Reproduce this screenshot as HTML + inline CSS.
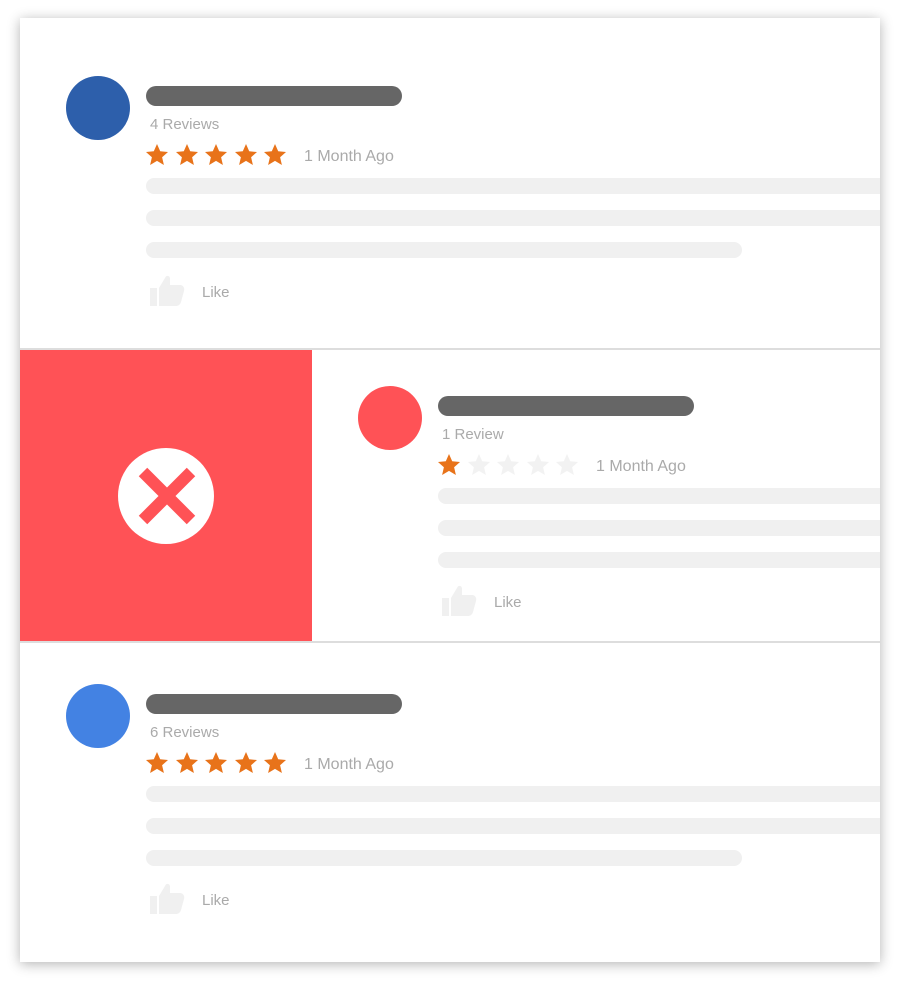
<!DOCTYPE html>
<html><head><style>
*{margin:0;padding:0;box-sizing:border-box}
body{width:900px;height:984px;background:#fff;position:relative;overflow:hidden;font-family:"Liberation Sans",sans-serif}
.card{position:absolute;left:20px;top:18px;width:860px;height:944px;background:#fff;box-shadow:0 2px 12px rgba(0,0,0,.3);overflow:hidden}
.a{position:absolute}
.av{position:absolute;width:64px;height:64px;border-radius:50%}
.nb{position:absolute;height:20px;width:256px;border-radius:10px;background:#666}
.gb{position:absolute;height:16px;border-radius:8px;background:#f0f0f0}
.t{position:absolute;color:#aaa;font-size:15px;white-space:nowrap}
.div{position:absolute;left:0;width:860px;height:2px;background:#ddd}
</style></head><body>
<div class="card">
<svg width="0" height="0" style="position:absolute"><defs><path id="st" d="M12 1l3.2 7.3 7.8.7-5.9 5.2 1.8 7.8L12 17.9 5.1 22l1.8-7.8L1 9l7.8-.7z"/><path id="th" d="M0 14h7v18H0zM9 14l6-10c1-3 5-3 5 1v6h10c3 0 5 3 4 6l-3 11c-1 3-3 4-5 4H9z"/></defs></svg>

<!-- section 1 -->
<div class="av" style="left:46px;top:58px;background:#2d5fab"></div>
<div class="nb" style="left:126px;top:68px"></div>
<div class="t" style="left:130px;top:98px">4 Reviews</div>
<svg class="a" style="left:125px;top:125px" width="150" height="26" fill="#e8731a"><use href="#st"/><use href="#st" x="30"/><use href="#st" x="59"/><use href="#st" x="89"/><use href="#st" x="118"/></svg>
<div class="t" style="left:284px;top:130px;font-size:16px">1 Month Ago</div>
<div class="gb" style="left:126px;top:160px;width:760px"></div>
<div class="gb" style="left:126px;top:192px;width:760px"></div>
<div class="gb" style="left:126px;top:224px;width:596px"></div>
<svg class="a" style="left:130px;top:256px" width="37" height="34" fill="#f0f0f0"><use href="#th"/></svg>
<div class="t" style="left:182px;top:266px">Like</div>

<div class="div" style="top:330px"></div>
<!-- section 2 -->
<div class="a" style="left:0;top:332px;width:292px;height:291px;background:#ff5256"></div>
<svg class="a" style="left:98px;top:430px" width="96" height="96"><circle cx="48" cy="48" r="48" fill="#fff"/><path d="M25 24L73 72M73 24L25 72" stroke="#ff5256" stroke-width="12"/></svg>
<div class="av" style="left:338px;top:368px;background:#ff5256"></div>
<div class="nb" style="left:418px;top:378px"></div>
<div class="t" style="left:422px;top:408px">1 Review</div>
<svg class="a" style="left:417px;top:435px" width="150" height="26"><use href="#st" fill="#e8731a"/><g fill="#f2f2f2"><use href="#st" x="30"/><use href="#st" x="59"/><use href="#st" x="89"/><use href="#st" x="118"/></g></svg>
<div class="t" style="left:576px;top:440px;font-size:16px">1 Month Ago</div>
<div class="gb" style="left:418px;top:470px;width:460px"></div>
<div class="gb" style="left:418px;top:502px;width:460px"></div>
<div class="gb" style="left:418px;top:534px;width:460px"></div>
<svg class="a" style="left:422px;top:566px" width="37" height="34" fill="#f0f0f0"><use href="#th"/></svg>
<div class="t" style="left:474px;top:576px">Like</div>
<div class="div" style="top:623px"></div>

<!-- section 3 -->
<div class="av" style="left:46px;top:666px;background:#4382e3"></div>
<div class="nb" style="left:126px;top:676px"></div>
<div class="t" style="left:130px;top:706px">6 Reviews</div>
<svg class="a" style="left:125px;top:733px" width="150" height="26" fill="#e8731a"><use href="#st"/><use href="#st" x="30"/><use href="#st" x="59"/><use href="#st" x="89"/><use href="#st" x="118"/></svg>
<div class="t" style="left:284px;top:738px;font-size:16px">1 Month Ago</div>
<div class="gb" style="left:126px;top:768px;width:760px"></div>
<div class="gb" style="left:126px;top:800px;width:760px"></div>
<div class="gb" style="left:126px;top:832px;width:596px"></div>
<svg class="a" style="left:130px;top:864px" width="37" height="34" fill="#f0f0f0"><use href="#th"/></svg>
<div class="t" style="left:182px;top:874px">Like</div>
</div>
</body></html>
